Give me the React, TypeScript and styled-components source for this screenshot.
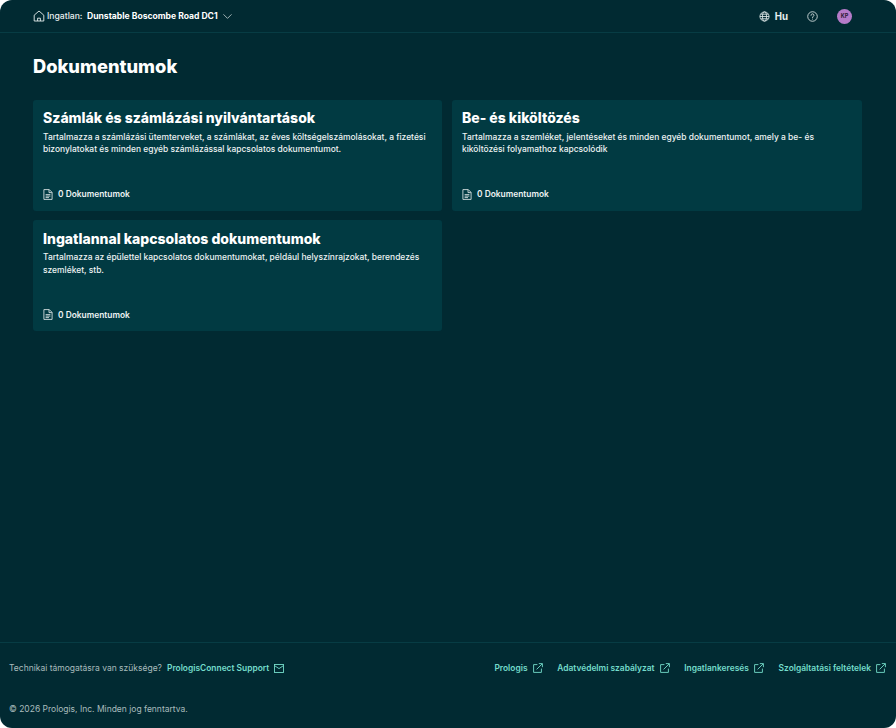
import styled, {createGlobalStyle} from "styled-components";
import {ChevronDown} from "lucide-react";

const GlobalStyle = createGlobalStyle`
    html, body {
        margin: 0;
        padding: 0;
        background: #ffffff;
    }

    body {
        font-family: "Inter", "Liberation Sans", sans-serif;
    }
`

const cards = [
    {
        title: "Számlák és számlázási nyilvántartások",
        desc: "Tartalmazza a számlázási ütemterveket, a számlákat, az éves költségelszámolásokat, a fizetési bizonylatokat és minden egyéb számlázással kapcsolatos dokumentumot.",
    },
    {
        title: "Be- és kiköltözés",
        desc: "Tartalmazza a szemléket, jelentéseket és minden egyéb dokumentumot, amely a be- és kiköltözési folyamathoz kapcsolódik",
    },
    {
        title: "Ingatlannal kapcsolatos dokumentumok",
        desc: "Tartalmazza az épülettel kapcsolatos dokumentumokat, például helyszínrajzokat, berendezés szemléket, stb.",
    },
]

const footerLinks = ["Prologis", "Adatvédelmi szabályzat", "Ingatlankeresés", "Szolgáltatási feltételek"]

const HouseIcon = () => (
    <svg width="12" height="12" viewBox="0 0 12 12" fill="none" stroke="currentColor" strokeWidth="0.9">
        <path d="M1.2 11V5.2L6 1l4.8 4.2V11z" strokeLinejoin="round"/>
        <path d="M4.6 11V8.2h2.8V11"/>
    </svg>
)

const GlobeIcon = () => (
    <svg width="11" height="11" viewBox="0 0 12 12" fill="none" stroke="currentColor" strokeWidth="0.9">
        <circle cx="6" cy="6" r="5"/>
        <ellipse cx="6" cy="6" rx="2.2" ry="5"/>
        <path d="M1 6h10M1.8 3.5h8.4M1.8 8.5h8.4"/>
    </svg>
)

const HelpIcon = () => (
    <svg width="11" height="11" viewBox="0 0 12 12" fill="none" stroke="currentColor" strokeWidth="0.9">
        <circle cx="6" cy="6" r="5.2"/>
        <path d="M4.4 4.7C4.4 3.7 5.1 3.1 6 3.1s1.6.6 1.6 1.5c0 1.2-1.6 1.3-1.6 2.6" strokeLinecap="round"/>
        <path d="M6 8.4v.9"/>
    </svg>
)

const DocumentIcon = () => (
    <svg width="10" height="11" viewBox="0 0 10 11" fill="none" stroke="currentColor" strokeWidth="0.8">
        <path d="M.9.6h5.4l2.8 2.8v7H.9z" strokeLinejoin="round"/>
        <path d="M6 .8v2.8h2.9M2.6 5.6h4.8M2.6 7.1h4.8M2.6 8.6h3.4"/>
    </svg>
)

const LinkIcon = () => (
    <svg width="10" height="10" viewBox="0 0 10 10" fill="none" stroke="currentColor" strokeWidth="0.9">
        <path d="M4.4 1.6H.6v7.8h7.8V5.6"/>
        <path d="M3.6 6.4L9.2.8M5.8.6h3.6v3.6"/>
    </svg>
)

const MailIcon = () => (
    <svg width="10" height="9" viewBox="0 0 10 9" fill="none" stroke="currentColor" strokeWidth="0.9">
        <rect x="0.5" y="0.5" width="9" height="8"/>
        <path d="M.8 1.8l4.2 2.8 4.2-2.8"/>
    </svg>
)

export default function App() {
    return (
        <Page>
            <GlobalStyle/>
            <TopBar>
                <PropertyPicker>
                    <HouseIcon/>
                    <PropertyLabel>Ingatlan:</PropertyLabel>
                    <PropertyName>Dunstable Boscombe Road DC1</PropertyName>
                    <ChevronDown size={15} strokeWidth={1.1}/>
                </PropertyPicker>
                <TopActions>
                    <Language>
                        <GlobeIcon/>
                        <span>Hu</span>
                    </Language>
                    <HelpIcon/>
                    <Avatar>KP</Avatar>
                </TopActions>
            </TopBar>
            <Main>
                <Heading>Dokumentumok</Heading>
                <CardGrid>
                    {cards.map(card => (
                        <Card key={card.title}>
                            <div>
                                <CardTitle>{card.title}</CardTitle>
                                <CardDesc>{card.desc}</CardDesc>
                            </div>
                            <CardCount>
                                <DocumentIcon/>
                                <span>0 Dokumentumok</span>
                            </CardCount>
                        </Card>
                    ))}
                </CardGrid>
            </Main>
            <Footer>
                <FooterRow>
                    <Support>
                        <span>Technikai támogatásra van szüksége?</span>
                        <FooterLink>
                            PrologisConnect Support
                            <MailIcon/>
                        </FooterLink>
                    </Support>
                    <FooterLinks>
                        {footerLinks.map(link => (
                            <FooterLink key={link}>
                                {link}
                                <LinkIcon/>
                            </FooterLink>
                        ))}
                    </FooterLinks>
                </FooterRow>
                <Copyright>© 2026 Prologis, Inc. Minden jog fenntartva.</Copyright>
            </Footer>
        </Page>
    )
}

const Page = styled.div`
    width: 896px;
    height: 728px;
    display: flex;
    flex-direction: column;
    overflow: hidden;
    border-radius: 12px;
    background: #012a32;
    color: #ffffff;
`

const TopBar = styled.header`
    height: 32px;
    flex: none;
    display: flex;
    align-items: center;
    justify-content: space-between;
    padding: 0 44px 0 33px;
    border-bottom: 1px solid #073c44;
`

const PropertyPicker = styled.div`
    display: flex;
    align-items: center;
    font-size: 8.6px;
    color: #e6eeee;

    svg:last-child {
        margin-left: 2px;
    }
`

const PropertyLabel = styled.span`
    font-weight: 500;
    margin-left: 2px;
`

const PropertyName = styled.span`
    font-size: 8.58px;
    font-weight: 700;
    margin-left: 4.5px;
    color: #ffffff;
`

const TopActions = styled.div`
    display: flex;
    align-items: center;
    gap: 19px;
    color: #e6eeee;
`

const Language = styled.div`
    display: flex;
    align-items: center;
    gap: 5px;
    font-size: 9.7px;
    font-weight: 700;
`

const Avatar = styled.div`
    width: 15px;
    height: 15px;
    border-radius: 50%;
    background: #b57bc9;
    color: #2b1a33;
    font-size: 5.5px;
    font-weight: 700;
    display: flex;
    align-items: center;
    justify-content: center;
`

const Main = styled.main`
    flex: 1;
    padding: 21px 34px 0 33px;
`

const Heading = styled.h1`
    margin: 0 0 21.5px;
    font-size: 18.3px;
    line-height: 24px;
    font-weight: 800;
`

const CardGrid = styled.div`
    display: grid;
    grid-template-columns: 409px 410px;
    grid-auto-rows: 111px;
    gap: 9.5px 10px;
`

const Card = styled.section`
    display: flex;
    flex-direction: column;
    justify-content: space-between;
    padding: 9.5px 10px 10.5px;
    border-radius: 3px;
    background: #013a42;
`

const CardTitle = styled.h2`
    margin: 0 0 4.5px;
    font-size: 14px;
    line-height: 17px;
    font-weight: 800;
`

const CardDesc = styled.p`
    margin: 0;
    font-size: 8.45px;
    line-height: 12.5px;
    font-weight: 500;
    color: #eef3f3;
`

const CardCount = styled.div`
    display: flex;
    align-items: center;
    gap: 5px;
    font-size: 8.4px;
    font-weight: 600;
    line-height: 12px;
    color: #eef3f3;
`

const Footer = styled.footer`
    height: 86px;
    flex: none;
    box-sizing: border-box;
    padding: 20px 10px 0 9px;
    border-top: 1px solid #073c44;
    font-size: 8.5px;
    color: #a9bcbd;
`

const FooterRow = styled.div`
    display: flex;
    align-items: center;
    justify-content: space-between;
`

const Support = styled.div`
    display: flex;
    align-items: center;
    gap: 5px;
`

const FooterLinks = styled.nav`
    display: flex;
    align-items: center;
    gap: 14.7px;
`

const FooterLink = styled.a`
    display: flex;
    align-items: center;
    gap: 5px;
    font-size: 8.42px;
    font-weight: 600;
    color: #74dccb;
`

const Copyright = styled.div`
    margin-top: 31px;
`
